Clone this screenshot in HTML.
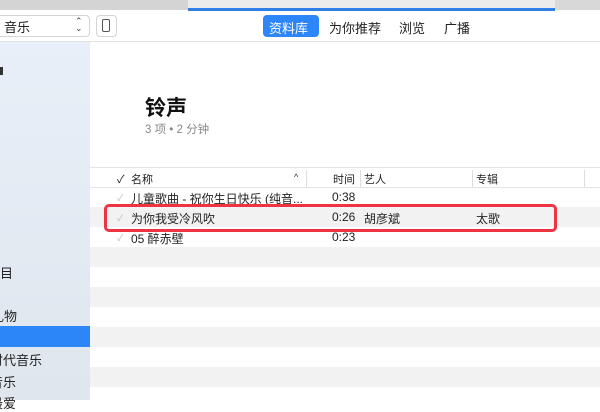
<!DOCTYPE html>
<html><head><meta charset="utf-8"><style>
body{margin:0;width:600px;height:400px;overflow:hidden;background:#fff;font-family:"Liberation Sans","Noto Sans CJK SC",sans-serif;position:relative}
.a{position:absolute}
.t{font-size:12px;color:#222;white-space:nowrap}
</style></head><body>
<div class="a" style="left:0;top:0;width:188px;height:10px;background:#d4d4d4"></div>
<div class="a" style="left:188px;top:0;width:367px;height:8px;background:#ececec"></div>
<div class="a" style="left:188px;top:8px;width:367px;height:3px;background:#2f7fe6"></div>
<div class="a" style="left:555px;top:0;width:45px;height:10px;background:#d8d8d8"></div>
<div class="a" style="left:0;top:41px;width:600px;height:1px;background:#e2e2e2"></div>
<div class="a" style="left:-6px;top:15px;width:94px;height:20px;border:1px solid #d4d4d4;border-radius:4px;background:#fff"></div>
<div class="a t" style="left:4px;top:17px;font-size:13px">音乐</div>
<div class="a" style="left:75px;top:18px;font-size:9px;color:#444;line-height:7px">⌃<br>⌄</div>
<div class="a" style="left:96px;top:15px;width:19px;height:20px;border:1px solid #d4d4d4;border-radius:4px;background:#fff"></div>
<div class="a" style="left:102px;top:19px;width:6px;height:11px;border:1.3px solid #555;border-radius:2px"></div>
<div class="a" style="left:263px;top:15px;width:56px;height:22px;background:#2d86f7;border-radius:4px"></div>
<div class="a t" style="left:269px;top:18px;font-size:13px;color:#fff">资料库</div>
<div class="a t" style="left:329px;top:18px;font-size:13px">为你推荐</div>
<div class="a t" style="left:399px;top:18px;font-size:13px">浏览</div>
<div class="a t" style="left:444px;top:18px;font-size:13px">广播</div>
<div class="a" style="left:0;top:42px;width:90px;height:358px;background:linear-gradient(#e8eff8,#e0e6ee)"></div>
<div class="a" style="left:0;top:67px;width:3px;height:8px;background:#333"></div>
<div class="a t" style="left:-13px;top:263px;font-size:13px">节目</div>
<div class="a t" style="left:-9px;top:306px;font-size:13px">礼物</div>
<div class="a" style="left:0;top:326px;width:90px;height:21px;background:#2d86f7"></div>
<div class="a t" style="left:-10px;top:350px;font-size:13px">时代音乐</div>
<div class="a t" style="left:-10px;top:372px;font-size:13px">音乐</div>
<div class="a t" style="left:-10px;top:393px;font-size:13px">最爱</div>
<div class="a t" style="left:145px;top:92px;font-size:21px;font-weight:bold;color:#111">铃声</div>
<div class="a t" style="left:145px;top:121px;font-size:11.5px;color:#888">3 项 • 2 分钟</div>
<div class="a" style="left:90px;top:167px;width:510px;height:1px;background:#e4e4e4"></div>
<div class="a" style="left:90px;top:187px;width:510px;height:1px;background:#e4e4e4"></div>
<div class="a" style="left:306px;top:170px;width:1px;height:17px;background:#ddd"></div>
<div class="a" style="left:360px;top:170px;width:1px;height:17px;background:#ddd"></div>
<div class="a" style="left:472px;top:170px;width:1px;height:17px;background:#ddd"></div>
<div class="a" style="left:584px;top:170px;width:1px;height:17px;background:#ddd"></div>
<div class="a t" style="left:117px;top:171px;font-size:11px">✓</div>
<div class="a t" style="left:131px;top:171px;font-size:11px">名称</div>
<div class="a t" style="left:294px;top:172px;font-size:9px">^</div>
<div class="a t" style="left:333px;top:171px;font-size:11px">时间</div>
<div class="a t" style="left:364px;top:171px;font-size:11px">艺人</div>
<div class="a t" style="left:476px;top:171px;font-size:11px">专辑</div>
<div class="a" style="left:90px;top:207px;width:510px;height:20px;background:#f2f2f2"></div>
<div class="a" style="left:90px;top:247px;width:510px;height:20px;background:#f2f2f2"></div>
<div class="a" style="left:90px;top:287px;width:510px;height:20px;background:#f2f2f2"></div>
<div class="a" style="left:90px;top:327px;width:510px;height:20px;background:#f2f2f2"></div>
<div class="a" style="left:90px;top:367px;width:510px;height:20px;background:#f2f2f2"></div>
<div class="a t" style="left:117px;top:191px;font-size:9px;color:#bbb">✓</div>
<div class="a t" style="left:131px;top:190px">儿童歌曲 - 祝你生日快乐 (纯音...</div>
<div class="a t" style="left:332px;top:190px">0:38</div>
<div class="a t" style="left:117px;top:211px;font-size:9px;color:#bbb">✓</div>
<div class="a t" style="left:131px;top:210px">为你我受冷风吹</div>
<div class="a t" style="left:332px;top:210px">0:26</div>
<div class="a t" style="left:364px;top:210px">胡彦斌</div>
<div class="a t" style="left:476px;top:210px">太歌</div>
<div class="a t" style="left:117px;top:231px;font-size:9px;color:#bbb">✓</div>
<div class="a t" style="left:131px;top:230px">05 醉赤壁</div>
<div class="a t" style="left:332px;top:230px">0:23</div>
<div class="a" style="left:104px;top:204px;width:447px;height:22px;border:3px solid #ee3343;border-radius:5px"></div>
</body></html>
